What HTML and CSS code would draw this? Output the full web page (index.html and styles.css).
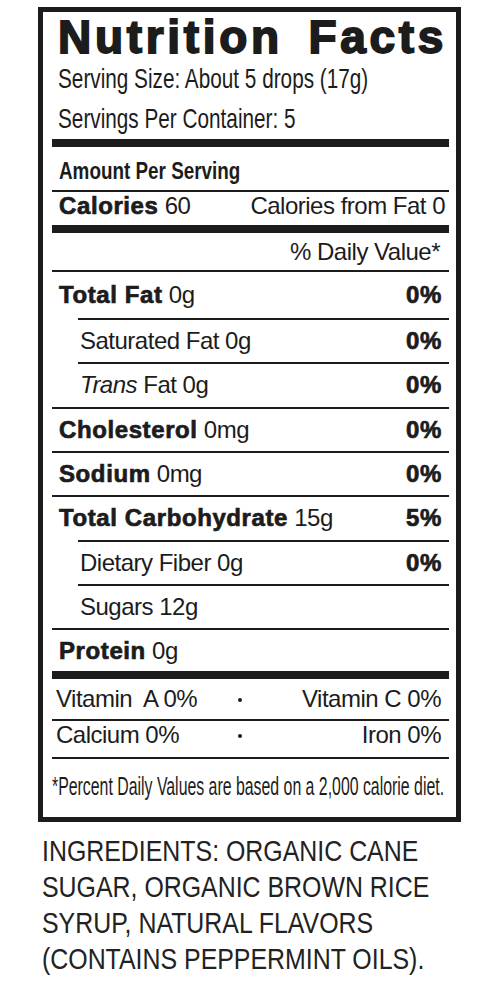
FILE: index.html
```html
<!DOCTYPE html>
<html lang="en">
<head>
<meta charset="utf-8">
<title>Nutrition Facts</title>
<link rel="stylesheet" href="styles.css">
</head>
<body>
<section class="label">
  <h1 class="title">Nutrition Facts</h1>
  <p class="serving serving-size"><span class="cond">Serving Size: About 5 drops (17g)</span></p>
  <p class="serving serving-count"><span class="cond">Servings Per Container: 5</span></p>
  <div class="bar"></div>
  <div class="amount"><span class="cond">Amount Per Serving</span></div>
  <div class="rule"></div>
  <div class="line calories"><span><b class="heavy">Calories</b> 60</span><span>Calories from Fat 0</span></div>
  <div class="bar"></div>
  <div class="line dv"><span></span><span>% Daily Value*</span></div>
  <div class="rule"></div>
  <div class="line nutrient first"><span><b class="heavy">Total Fat</b> 0g</span><b class="heavy">0%</b></div>
  <div class="line nutrient sub"><span>Saturated Fat 0g</span><b class="heavy">0%</b></div>
  <div class="line nutrient sub"><span><i>Trans</i> Fat 0g</span><b class="heavy">0%</b></div>
  <div class="line nutrient"><span><b class="heavy">Cholesterol</b> 0mg</span><b class="heavy">0%</b></div>
  <div class="line nutrient"><span><b class="heavy">Sodium</b> 0mg</span><b class="heavy">0%</b></div>
  <div class="line nutrient"><span><b class="heavy">Total Carbohydrate</b> 15g</span><b class="heavy">5%</b></div>
  <div class="line nutrient sub"><span>Dietary Fiber 0g</span><b class="heavy">0%</b></div>
  <div class="line nutrient sub"><span>Sugars 12g</span></div>
  <div class="line nutrient protein"><span><b class="heavy">Protein</b> 0g</span></div>
  <div class="bar"></div>
  <div class="vit vit-a"><span>Vitamin&nbsp; A 0%</span><span class="dot"></span><span class="vit-right">Vitamin C 0%</span></div>
  <div class="rule"></div>
  <div class="vit vit-b"><span>Calcium 0%</span><span class="dot"></span><span class="vit-right">Iron 0%</span></div>
  <div class="rule"></div>
  <p class="footnote"><span class="cond">*Percent Daily Values are based on a 2,000 calorie diet.</span></p>
</section>
<p class="ingredients"><span class="cond">INGREDIENTS: ORGANIC CANE<br>SUGAR, ORGANIC BROWN RICE<br>SYRUP, NATURAL FLAVORS<br>(CONTAINS PEPPERMINT OILS).</span></p>
</body>
</html>
```

FILE: styles.css
```css
html, body {
  margin: 0;
  padding: 0;
  background: #ffffff;
}

body {
  color: #1c1c1c;
  font-family: "Liberation Sans", Arial, sans-serif;
}

.cond {
  display: inline-block;
  white-space: nowrap;
  transform-origin: 0 50%;
}

.label {
  box-sizing: border-box;
  width: 423px;
  height: 815px;
  margin: 7px 0 0 38px;
  border: 5px solid #1c1c1c;
  padding: 0 7px 0 9px;
  overflow: hidden;
}

.title {
  margin: 0;
  padding: 2px 0 0 6px;
  height: 46px;
  line-height: 46px;
  font-size: 46px;
  font-weight: bold;
  letter-spacing: 3.7px;
  word-spacing: 9px;
  white-space: nowrap;
  -webkit-text-stroke: 1.8px #1c1c1c;
}

.serving {
  margin: 0;
  padding-left: 6px;
  font-size: 28.5px;
  white-space: nowrap;
  overflow: hidden;
}

.serving .cond {
  transform: scaleX(0.728);
}

.serving-size {
  height: 37px;
  line-height: 37px;
}

.serving-count {
  height: 42px;
  line-height: 42px;
}

.bar {
  height: 8px;
  background: #1c1c1c;
}

.rule {
  height: 2px;
  background: #1c1c1c;
}

.amount {
  box-sizing: border-box;
  height: 43px;
  padding: 5px 0 0 7px;
  line-height: 38px;
  font-weight: bold;
  font-size: 24.5px;
  overflow: hidden;
}

.amount .cond {
  transform: scaleX(0.77);
}

.line {
  box-sizing: border-box;
  display: flex;
  justify-content: space-between;
  align-items: center;
  padding: 0 7px 0 7px;
  font-size: 24px;
  letter-spacing: -0.5px;
  white-space: nowrap;
}

.heavy {
  font-weight: bold;
  letter-spacing: 0.6px;
  -webkit-text-stroke: 0.7px #1c1c1c;
}

.calories {
  height: 33px;
  line-height: 28px;
  align-items: flex-start;
  padding-right: 4px;
}

.dv {
  height: 37px;
  line-height: 37px;
  padding-right: 9px;
}

.nutrient {
  height: 44.333px;
  line-height: 42px;
  border-top: 2px solid #1c1c1c;
}

.nutrient.first {
  height: 46px;
  border-top: 0;
}

.nutrient.sub {
  margin-left: 26px;
  padding-left: 2px;
}

.nutrient.protein {
  height: 42.667px;
}

.vit {
  display: grid;
  grid-template-columns: 180px 8px 1fr;
  align-items: center;
  padding: 0 8px 0 4px;
  font-size: 24px;
  letter-spacing: -0.5px;
  white-space: nowrap;
}

.vit-a {
  height: 40px;
  line-height: 40px;
}

.vit-b {
  box-sizing: border-box;
  height: 36px;
  line-height: 28px;
  padding-bottom: 8px;
}

.vit-right {
  text-align: right;
}

.dot {
  justify-self: center;
  width: 4px;
  height: 4px;
  margin-top: 2px;
  border-radius: 50%;
  background: #1c1c1c;
}

.footnote {
  box-sizing: border-box;
  height: 58px;
  margin: 0;
  padding: 15px 0 0 0;
  line-height: 25px;
  font-size: 26px;
  overflow: hidden;
}

.footnote .cond {
  transform: scaleX(0.61);
}

.ingredients {
  margin: 11px 0 0 42px;
  font-size: 30px;
  line-height: 36px;
  color: #222222;
  overflow: hidden;
}

.ingredients .cond {
  transform-origin: 0 0;
  transform: scaleX(0.83);
}
```
